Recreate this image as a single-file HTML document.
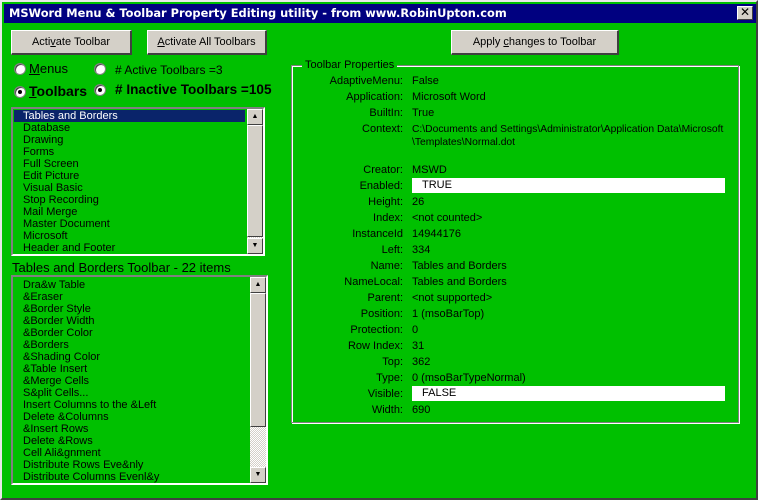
<!DOCTYPE html>
<html><head><style>
*{margin:0;padding:0;box-sizing:border-box}
body{width:758px;height:500px;background:#d4d0c8;font-family:"Liberation Sans",sans-serif;font-size:11px;position:relative;overflow:hidden}
.win{position:absolute;left:0;top:0;width:758px;height:500px;border:2px solid #e8e8e8;border-right-color:#404040;border-bottom-color:#404040;background:#00c000}
.title{position:absolute;left:2px;top:2px;width:752px;height:19px;background:#000080;color:#fff;font-weight:bold;font-size:11.4px;line-height:19px;padding-left:5px;font-family:"DejaVu Sans",sans-serif}
.x{position:absolute;right:3px;top:2px;width:16px;height:14px;background:#d4d0c8;border:1px solid #fff;border-right-color:#404040;border-bottom-color:#404040;color:#000;font-size:12px;line-height:11px;text-align:center;font-weight:bold}
.a{position:absolute}
.btn{position:absolute;background:#d4d0c8;border:1px solid #fff;border-right:2px solid #404040;border-bottom:2px solid #404040;text-align:center;line-height:23px;color:#000}
.rad{position:absolute;width:12px;height:12px;border-radius:50%;background:#fff;border:1px solid #808080;box-shadow:inset 1px 1px 0 #404040}
.rad.on::after{content:"";position:absolute;left:3px;top:3px;width:4px;height:4px;border-radius:50%;background:#000}
.list{position:absolute;border:2px solid #808080;border-right-color:#fff;border-bottom-color:#fff;background:#00c000}
.list div.r{height:12px;line-height:12px;padding-left:9px;white-space:nowrap}
.sb{position:absolute;top:0;right:0;width:16px;bottom:0;background:repeating-conic-gradient(#fff 0 25%,#d4d0c8 0 50%) 0 0/2px 2px}
.sbb{position:absolute;left:0;width:16px;height:16px;background:#d4d0c8;border:1px solid #fff;border-right-color:#404040;border-bottom-color:#404040;font-size:7px;text-align:center;line-height:14px}
.lab{position:absolute;width:110px;text-align:right;left:293px}
.val{position:absolute;left:412px}
.wb{position:absolute;left:412px;width:313px;height:15px;background:#fff;padding-left:10px;line-height:15px}
</style></head><body>
<div class="win">
<div class="title">MSWord Menu &amp; Toolbar Property Editing utility - from www.RobinUpton.com<div class="x">✕</div></div>
</div>
<div class="btn" style="left:11px;top:30px;width:121px;height:25px">Acti<u>v</u>ate Toolbar</div>
<div class="btn" style="left:147px;top:30px;width:120px;height:25px"><u>A</u>ctivate All Toolbars</div>
<div class="btn" style="left:451px;top:30px;width:168px;height:25px">Apply <u>c</u>hanges to Toolbar</div>

<div class="rad" style="left:14px;top:63px"></div>
<div class="a" style="left:29px;top:61px;font-size:13px"><u>M</u>enus</div>
<div class="rad on" style="left:14px;top:86px"></div>
<div class="a" style="left:29px;top:83px;font-size:14px;font-weight:bold"><u>T</u>oolbars</div>
<div class="rad" style="left:94px;top:63px"></div>
<div class="a" style="left:115px;top:63px;font-size:12px"># Active Toolbars =3</div>
<div class="rad on" style="left:94px;top:84px"></div>
<div class="a" style="left:115px;top:82px;font-size:13.6px;font-weight:bold"># Inactive Toolbars =105</div>

<div class="list" style="left:11px;top:107px;width:254px;height:149px">
<div style="position:absolute;left:1px;top:1px;right:18px">
<div class="r" style="background:#0a246a;color:#fff">Tables and Borders</div>
<div class="r">Database</div><div class="r">Drawing</div><div class="r">Forms</div><div class="r">Full Screen</div><div class="r">Edit Picture</div><div class="r">Visual Basic</div><div class="r">Stop Recording</div><div class="r">Mail Merge</div><div class="r">Master Document</div><div class="r">Microsoft</div><div class="r">Header and Footer</div>
</div>
<div class="sb"><div class="sbb" style="top:0">▲</div><div class="sbb" style="top:16px;height:112px"></div><div class="sbb" style="bottom:0">▼</div></div>
</div>

<div class="a" style="left:12px;top:260px;font-size:13px">Tables and Borders Toolbar - 22 items</div>

<div class="list" style="left:11px;top:275px;width:257px;height:210px">
<div style="position:absolute;left:1px;top:2px;right:18px">
<div class="r">Dra&amp;w Table</div><div class="r">&amp;Eraser</div><div class="r">&amp;Border Style</div><div class="r">&amp;Border Width</div><div class="r">&amp;Border Color</div><div class="r">&amp;Borders</div><div class="r">&amp;Shading Color</div><div class="r">&amp;Table Insert</div><div class="r">&amp;Merge Cells</div><div class="r">S&amp;plit Cells...</div><div class="r">Insert Columns to the &amp;Left</div><div class="r">Delete &amp;Columns</div><div class="r">&amp;Insert Rows</div><div class="r">Delete &amp;Rows</div><div class="r">Cell Ali&amp;gnment</div><div class="r">Distribute Rows Eve&amp;nly</div><div class="r">Distribute Columns Evenl&amp;y</div>
</div>
<div class="sb"><div class="sbb" style="top:0">▲</div><div class="sbb" style="top:16px;height:134px"></div><div class="sbb" style="bottom:0">▼</div></div>
</div>

<div class="a" style="left:291px;top:65px;width:448px;height:358px;border:1px solid #808080;box-shadow:1px 1px 0 #fff inset,1px 1px 0 #fff"></div>
<div class="a" style="left:302px;top:59px;background:#00c000;padding:0 3px">Toolbar Properties</div>

<div class="lab" style="top:75px">AdaptiveMenu:</div><div class="val" style="top:75px">False</div>
<div class="lab" style="top:91px">Application:</div><div class="val" style="top:91px">Microsoft Word</div>
<div class="lab" style="top:107px">BuiltIn:</div><div class="val" style="top:107px">True</div>
<div class="lab" style="top:123px">Context:</div><div class="val" style="top:123px;line-height:13px;font-size:10.3px">C:\Documents and Settings\Administrator\Application Data\Microsoft<br>\Templates\Normal.dot</div>
<div class="lab" style="top:164px">Creator:</div><div class="val" style="top:164px">MSWD</div>
<div class="lab" style="top:180px">Enabled:</div><div class="wb" style="top:178px">TRUE</div>
<div class="lab" style="top:196px">Height:</div><div class="val" style="top:196px">26</div>
<div class="lab" style="top:212px">Index:</div><div class="val" style="top:212px">&lt;not counted&gt;</div>
<div class="lab" style="top:228px">InstanceId</div><div class="val" style="top:228px">14944176</div>
<div class="lab" style="top:244px">Left:</div><div class="val" style="top:244px">334</div>
<div class="lab" style="top:260px">Name:</div><div class="val" style="top:260px">Tables and Borders</div>
<div class="lab" style="top:276px">NameLocal:</div><div class="val" style="top:276px">Tables and Borders</div>
<div class="lab" style="top:292px">Parent:</div><div class="val" style="top:292px">&lt;not supported&gt;</div>
<div class="lab" style="top:308px">Position:</div><div class="val" style="top:308px">1 (msoBarTop)</div>
<div class="lab" style="top:324px">Protection:</div><div class="val" style="top:324px">0</div>
<div class="lab" style="top:340px">Row Index:</div><div class="val" style="top:340px">31</div>
<div class="lab" style="top:356px">Top:</div><div class="val" style="top:356px">362</div>
<div class="lab" style="top:372px">Type:</div><div class="val" style="top:372px">0 (msoBarTypeNormal)</div>
<div class="lab" style="top:388px">Visible:</div><div class="wb" style="top:386px">FALSE</div>
<div class="lab" style="top:404px">Width:</div><div class="val" style="top:404px">690</div>
</body></html>
